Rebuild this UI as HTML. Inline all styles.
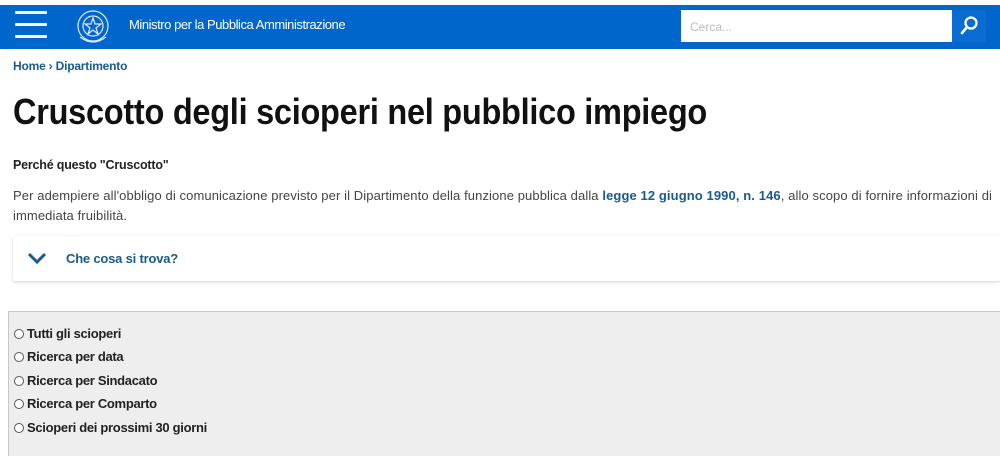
<!DOCTYPE html>
<html><head><meta charset="utf-8"><style>
*{margin:0;padding:0;box-sizing:border-box}
body{width:1000px;height:456px;overflow:hidden;background:#fff;font-family:"Liberation Sans",sans-serif;color:#1a1a1a;position:relative}
.hdr{position:absolute;top:5px;left:0;width:1000px;height:44px;background:#0066cc}
.burg{position:absolute;left:15px;top:6px;width:32px}
.burg i{display:block;height:3px;background:#fff;margin-bottom:9px;border-radius:1px}
.logo{position:absolute;left:74px;top:2px}
.brand{position:absolute;left:129px;top:12px;color:#fff;font-size:13px;letter-spacing:-0.45px}
.search{position:absolute;left:681px;top:5px;width:271px;height:32px;background:#fff;color:#bbb;font-size:12px;padding:10px 9px}
.sbtn{position:absolute;left:952px;top:5px;width:34px;height:32px;background:#0a6bd0}
.bc{position:absolute;left:13px;top:59px;font-size:12px;font-weight:bold;color:#1a5a8c;letter-spacing:-0.2px}
h1{position:absolute;left:13px;top:91px;font-size:36px;font-weight:bold;color:#111;white-space:nowrap;transform-origin:left top;transform:scaleX(0.903);letter-spacing:-0.3px}
.h3{position:absolute;left:13px;top:158px;font-size:12.5px;font-weight:bold;color:#222;letter-spacing:-0.2px}
.p{position:absolute;left:13px;top:186px;width:990px;font-size:13px;line-height:20px;color:#444;letter-spacing:0.1px}
.p b{color:#1a5a8c}
.acc{position:absolute;left:13px;top:236px;width:987px;height:45px;background:#fff;box-shadow:0 1px 3px rgba(0,0,0,.18);border-radius:2px}
.acc span{position:absolute;left:53px;top:15px;font-size:13px;font-weight:bold;color:#1a5a8c;letter-spacing:-0.2px}
.panel{position:absolute;left:8px;top:311px;width:992px;height:145px;background:#eeeeee;border-top:1px solid #c8c8c8;border-left:1px solid #c8c8c8}
.r{position:absolute;left:5px;font-size:13px;font-weight:bold;color:#222;letter-spacing:-0.3px}
.r i{display:inline-block;width:10px;height:10px;border:1px solid #555;border-radius:50%;margin-right:3px;vertical-align:-1px;background:#fff}
</style></head><body>
<div class="hdr">
 <div class="burg"><i></i><i></i><i></i></div>
 <svg class="logo" width="38" height="40" viewBox="0 0 38 40"><g fill="none" stroke="#dfe9f5" stroke-width="1.2"><circle cx="19" cy="19" r="15"/><circle cx="19" cy="19" r="10"/><polygon points="19,11 21,17 27,17 22,21 24,27 19,23 14,27 16,21 11,17 17,17"/><path d="M6 30 Q19 40 32 30"/></g></svg>
 <div class="brand">Ministro per la Pubblica Amministrazione</div>
 <div class="search">Cerca...</div>
 <div class="sbtn"><svg width="34" height="32" viewBox="0 0 34 32"><circle cx="19" cy="13" r="5.5" fill="none" stroke="#fff" stroke-width="2.3"/><line x1="15" y1="17" x2="10" y2="23" stroke="#fff" stroke-width="2.6" stroke-linecap="round"/></svg></div>
</div>
<div class="bc">Home › Dipartimento</div>
<h1>Cruscotto degli scioperi nel pubblico impiego</h1>
<div class="h3">Perché questo "Cruscotto"</div>
<div class="p">Per adempiere all'obbligo di comunicazione previsto per il Dipartimento della funzione pubblica dalla <b>legge 12 giugno 1990, n. 146</b>, allo scopo di fornire informazioni di immediata fruibilità.</div>
<div class="acc"><svg style="position:absolute;left:14px;top:16px" width="20" height="13" viewBox="0 0 20 13"><path d="M2 2 L10 10 L18 2" fill="none" stroke="#1a5a8c" stroke-width="3"/></svg><span>Che cosa si trova?</span></div>
<div class="panel">
 <div class="r" style="top:14px"><i></i>Tutti gli scioperi</div>
 <div class="r" style="top:37px"><i></i>Ricerca per data</div>
 <div class="r" style="top:61px"><i></i>Ricerca per Sindacato</div>
 <div class="r" style="top:84px"><i></i>Ricerca per Comparto</div>
 <div class="r" style="top:108px"><i></i>Scioperi dei prossimi 30 giorni</div>
</div>
</body></html>
